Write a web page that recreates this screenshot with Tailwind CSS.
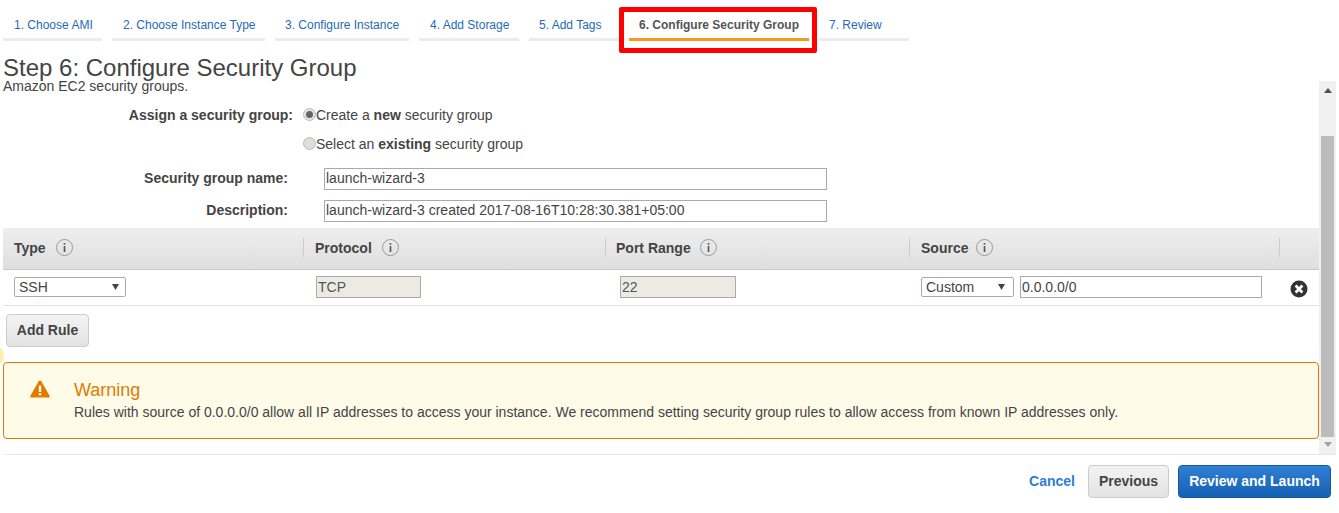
<!DOCTYPE html>
<html>
<head>
<meta charset="utf-8">
<script src="https://cdn.jsdelivr.net/npm/@tailwindcss/browser@4"></script>
</head>
<body class="bg-white overflow-hidden">
<div class="relative w-[1339px] h-[513px] overflow-hidden bg-white text-[#444] font-['Liberation_Sans',Arial,sans-serif] text-[14px] leading-[20px]">

  <!-- wizard tabs -->
  <nav class="flex gap-[10px] pl-[3px] pt-[15px] h-[41px] text-[12px] leading-[20px] text-[#1e6bb8]">
    <div class="w-[99px] h-[26px] pl-[11px] border-b-[3px] border-[#ececec]">1. Choose AMI</div>
    <div class="w-[153px] h-[26px] pl-[11px] border-b-[3px] border-[#ececec]">2. Choose Instance Type</div>
    <div class="w-[134px] h-[26px] pl-[10px] border-b-[3px] border-[#ececec]">3. Configure Instance</div>
    <div class="w-[100px] h-[26px] pl-[11px] border-b-[3px] border-[#ececec]">4. Add Storage</div>
    <div class="w-[90px] h-[26px] pl-[10px] border-b-[3px] border-[#ececec]">5. Add Tags</div>
    <div class="w-[180px] h-[26px] pl-[10px] border-b-[3px] border-[#f89a1c] text-[#555] font-bold">6. Configure Security Group</div>
    <div class="w-[90px] h-[26px] pl-[10px] border-b-[3px] border-[#ececec]">7. Review</div>
  </nav>

  <!-- highlight drawn on top of the screenshot -->
  <div class="absolute left-[619px] top-[7px] w-[198px] h-[46px] border-[5px] border-[#ff0000] rounded-[2px]"></div>

  <!-- faint yellow highlight at left edge -->
  <div class="absolute left-[-17px] top-[345px] w-[21px] h-[21px] rounded-full bg-[#fdeea8]"></div>

  <header class="pl-[3px] pt-[13px]">
    <h1 class="text-[24px] leading-[28px] text-[#444]">Step 6: Configure Security Group</h1>
    <p class="mt-[-4px] h-[20px] leading-[16px]">Amazon EC2 security groups.</p>
  </header>

  <div class="flex h-[373px] mt-[-17px]">
    <main class="w-[1316px] ml-[3px] pt-[24px]">
      <!-- radios -->
      <div class="flex h-[29px]">
        <div class="w-[290px] text-right font-bold">Assign a security group:</div>
        <label class="flex ml-[10px]">
          <span class="mt-[3px] w-[13px] h-[13px] rounded-full border border-[#bbb] bg-[#e4e4e4] flex items-center justify-center"><span class="w-[7px] h-[7px] rounded-full bg-[#666]"></span></span>
          <span>Create a <b>new</b> security group</span>
        </label>
      </div>
      <div class="flex h-[33px]">
        <label class="flex ml-[300px]">
          <span class="mt-[3px] w-[13px] h-[13px] rounded-full border border-[#bbb] bg-[#ddd]"></span>
          <span>Select an <b>existing</b> security group</span>
        </label>
      </div>

      <div class="flex items-center h-[22px] mt-[1px]">
        <div class="w-[285px] pb-[2px] text-right font-bold">Security group name:</div>
        <div class="ml-[36px] w-[503px] h-[22px] border border-[#aaa] pl-[1px] leading-[18px]">launch-wizard-3</div>
      </div>
      <div class="flex items-center h-[22px] mt-[10px]">
        <div class="w-[285px] pb-[2px] text-right font-bold">Description:</div>
        <div class="ml-[36px] w-[503px] h-[22px] border border-[#aaa] pl-[1px] leading-[18px]">launch-wizard-3 created 2017-08-16T10:28:30.381+05:00</div>
      </div>

      <!-- rules table -->
      <div class="mt-[6px] flex h-[42px] pb-[2px] bg-gradient-to-b from-[#eeeeee] to-[#dfdfdf] border-b border-[#c8c8c8] font-bold">
        <div class="w-[300px] flex items-center pl-[11px]">Type
          <svg class="ml-[10px]" width="17" height="17" viewBox="0 0 17 17" fill="none"><circle cx="8.5" cy="8.5" r="8" stroke="#999"/><rect x="7.7" y="7" width="1.6" height="6" fill="#555"/><rect x="7.7" y="4" width="1.6" height="1.7" fill="#555"/></svg>
        </div>
        <div class="w-[302px] flex items-center pl-[12px] relative before:content-[''] before:absolute before:left-0 before:top-[10px] before:h-[19px] before:w-px before:bg-[#ccc]">Protocol
          <svg class="ml-[10px]" width="17" height="17" viewBox="0 0 17 17" fill="none"><circle cx="8.5" cy="8.5" r="8" stroke="#999"/><rect x="7.7" y="7" width="1.6" height="6" fill="#555"/><rect x="7.7" y="4" width="1.6" height="1.7" fill="#555"/></svg>
        </div>
        <div class="w-[304px] flex items-center pl-[11px] relative before:content-[''] before:absolute before:left-0 before:top-[10px] before:h-[19px] before:w-px before:bg-[#ccc]">Port Range
          <svg class="ml-[9px]" width="17" height="17" viewBox="0 0 17 17" fill="none"><circle cx="8.5" cy="8.5" r="8" stroke="#999"/><rect x="7.7" y="7" width="1.6" height="6" fill="#555"/><rect x="7.7" y="4" width="1.6" height="1.7" fill="#555"/></svg>
        </div>
        <div class="w-[370px] flex items-center pl-[12px] relative before:content-[''] before:absolute before:left-0 before:top-[10px] before:h-[19px] before:w-px before:bg-[#ccc]">Source
          <svg class="ml-[8px]" width="17" height="17" viewBox="0 0 17 17" fill="none"><circle cx="8.5" cy="8.5" r="8" stroke="#999"/><rect x="7.7" y="7" width="1.6" height="6" fill="#555"/><rect x="7.7" y="4" width="1.6" height="1.7" fill="#555"/></svg>
        </div>
        <div class="flex-1 relative before:content-[''] before:absolute before:left-0 before:top-[10px] before:h-[19px] before:w-px before:bg-[#ccc]"></div>
      </div>
      <div class="flex h-[36px] pb-[2px] items-center border-b border-[#e1e1e1]">
        <div class="w-[301px] pl-[11px]">
          <div class="w-[112px] h-[20px] border border-[#aaa] rounded-[2px] pl-[4px] leading-[18px] flex justify-between items-center">SSH
            <svg class="mr-[6px]" width="7" height="6" viewBox="0 0 7 6"><path d="M0 0H7L3.5 6Z" fill="#444"/></svg>
          </div>
        </div>
        <div class="w-[301px] pl-[12px]">
          <div class="w-[105px] h-[22px] border border-[#aaa] bg-[#ebebe4] pl-[1px] leading-[20px] text-[#555]">TCP</div>
        </div>
        <div class="w-[304px] pl-[15px]">
          <div class="w-[116px] h-[22px] border border-[#aaa] bg-[#ebebe4] pl-[1px] leading-[20px] text-[#555]">22</div>
        </div>
        <div class="w-[371px] pl-[12px] flex items-center">
          <div class="w-[93px] h-[20px] border border-[#aaa] rounded-[2px] pl-[4px] leading-[18px] flex justify-between items-center">Custom
            <svg class="mr-[8px]" width="7" height="6" viewBox="0 0 7 6"><path d="M0 0H7L3.5 6Z" fill="#444"/></svg>
          </div>
          <div class="ml-[6px] w-[242px] h-[22px] border border-[#aaa] pl-[1px] leading-[20px]">0.0.0.0/0</div>
        </div>
        <svg class="ml-[10px] mt-[5px]" width="18" height="18" viewBox="0 0 18 18"><circle cx="9" cy="9" r="8.5" fill="#333"/><path d="M5.6 5.6L12.4 12.4M12.4 5.6L5.6 12.4" stroke="#fff" stroke-width="2.8"/></svg>
      </div>

      <button class="block mt-[8px] ml-[3px] w-[83px] h-[33px] pb-[2px] rounded-[4px] border border-[#ccc] bg-gradient-to-b from-[#f3f3f3] to-[#e3e3e3] font-bold text-[#444]">Add Rule</button>

      <!-- warning -->
      <section class="mt-[15px] h-[77px] rounded-[4px] border border-[#e07b00] bg-[#fffbe9] flex">
        <svg class="ml-[26px] mt-[17px]" width="20" height="18" viewBox="0 0 20 18"><path d="M10 0.5C10.6 0.5 11 0.8 11.3 1.3L19.6 15.8C20.1 16.8 19.6 17.6 18.6 17.6H1.4C0.4 17.6 -0.1 16.8 0.4 15.8L8.7 1.3C9 0.8 9.4 0.5 10 0.5Z" fill="#e07b00"/><rect x="8.8" y="5.5" width="2.4" height="6.5" fill="#fffbe9"/><rect x="8.8" y="13" width="2.4" height="2.4" fill="#fffbe9"/></svg>
        <div class="ml-[24px] pt-[15px]">
          <h2 class="text-[18px] leading-[24px] text-[#e07b00]">Warning</h2>
          <p class="text-[#444]">Rules with source of 0.0.0.0/0 allow all IP addresses to access your instance. We recommend setting security group rules to allow access from known IP addresses only.</p>
        </div>
      </section>
    </main>

    <!-- scrollbar -->
    <div class="w-[17px] h-[373px] bg-[#f0f0f0] flex flex-col items-center justify-between">
      <div class="flex flex-col items-center w-full">
        <svg class="mt-[7px]" width="8" height="5" viewBox="0 0 8 5"><path d="M4 0L8 5H0Z" fill="#505050"/></svg>
        <div class="mt-[43px] w-[13px] h-[301px] bg-[#bcbcbc]"></div>
      </div>
      <svg class="mb-[7px]" width="8" height="5" viewBox="0 0 8 5"><path d="M0 0H8L4 5Z" fill="#a3a3a3"/></svg>
    </div>
  </div>

  <!-- footer -->
  <footer class="ml-[3px] w-[1333px] border-t border-[#eaeaea] flex items-center justify-end pt-[10px] font-bold">
    <span class="text-[#2d7dd6] pb-[2px]">Cancel</span>
    <button class="ml-[13px] w-[81px] h-[33px] pb-[2px] rounded-[4px] border border-[#ccc] bg-gradient-to-b from-[#f3f3f3] to-[#e3e3e3] font-bold text-[#444]">Previous</button>
    <button class="ml-[9px] mr-[5px] w-[153px] h-[33px] pb-[2px] rounded-[4px] border border-[#15589f] bg-gradient-to-b from-[#2f80d6] to-[#1560b3] font-bold text-white">Review and Launch</button>
  </footer>
</div>
</body>
</html>
